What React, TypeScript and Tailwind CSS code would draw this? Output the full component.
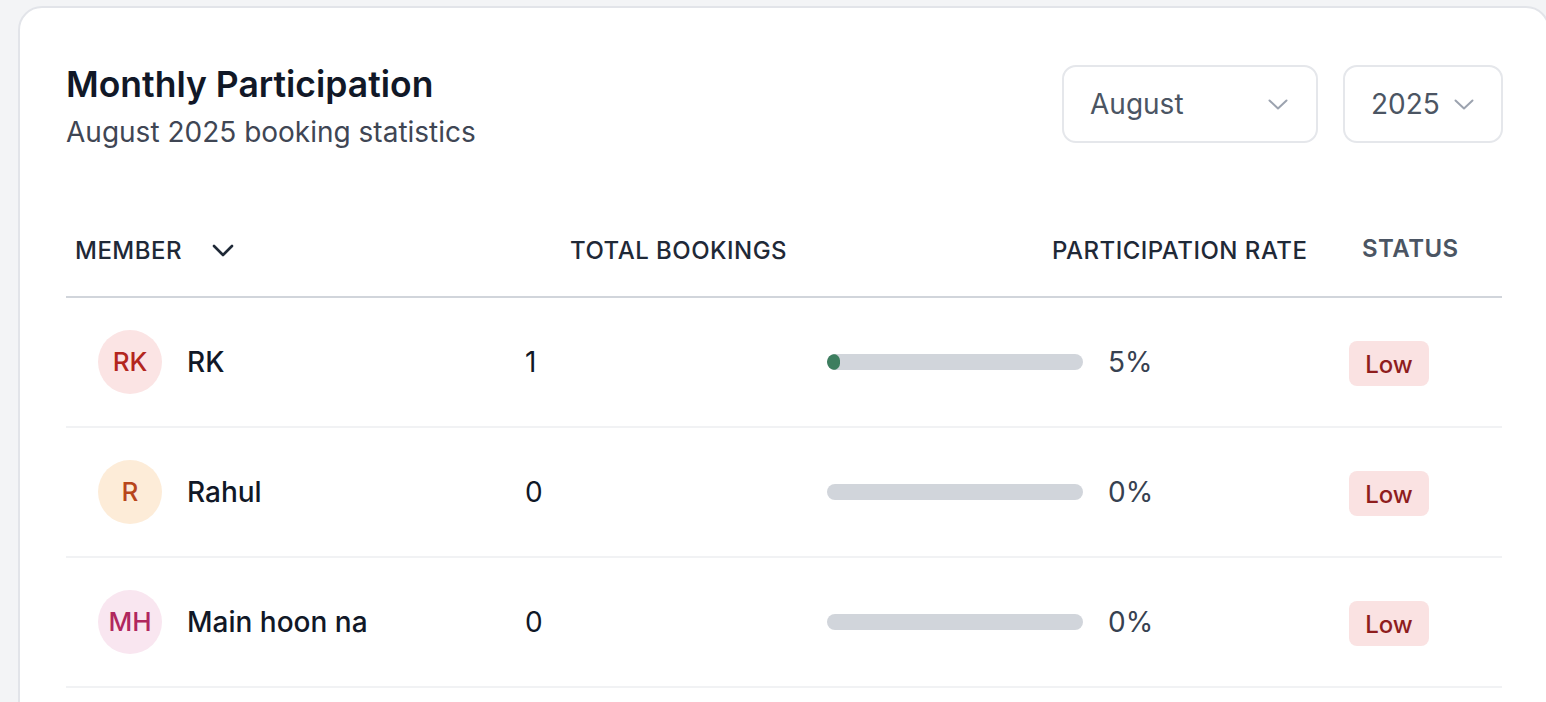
import React from "react";

type Row = {
  initials: string;
  name: string;
  bookings: number;
  rate: number;
  avatarBg: string;
  avatarText: string;
};

const rows: Row[] = [
  { initials: "RK", name: "RK", bookings: 1, rate: 5, avatarBg: "bg-[#fbe4e4]", avatarText: "text-[#b3261e]" },
  { initials: "R", name: "Rahul", bookings: 0, rate: 0, avatarBg: "bg-[#fdecd8]", avatarText: "text-[#b8461b]" },
  { initials: "MH", name: "Main hoon na", bookings: 0, rate: 0, avatarBg: "bg-[#f9e6f0]", avatarText: "text-[#b0275e]" },
];

function SelectChevron() {
  return (
    <svg width="20" height="11" viewBox="0 0 20 11" fill="none">
      <polyline points="1.5,1.5 10,9.5 18.5,1.5" stroke="#9ca3af" strokeWidth="2" strokeLinecap="round" strokeLinejoin="round" />
    </svg>
  );
}

function Select({ label, width, textPad, gap }: { label: string; width: string; textPad: string; gap: string }) {
  return (
    <div className={`flex h-[78px] items-center rounded-[14px] border-2 border-[#e5e7eb] bg-white ${width} ${textPad}`}>
      <span className="text-[28px] leading-none text-[#4b5563]">{label}</span>
      <span className={gap}>
        <SelectChevron />
      </span>
    </div>
  );
}

export default function App() {
  return (
    <div
      className="min-h-[702px] w-full overflow-hidden bg-[#f3f4f6] pl-[18px] pt-[6px]"
      style={{ fontFamily: "Inter, 'Noto Sans', sans-serif" }}
    >
      <div className="w-[1532px] rounded-[24px] border-2 border-[#e2e4e9] bg-white px-[46px] pt-[57px] pb-[40px]">
        <div className="flex items-start justify-between">
          <div>
            <h2 className="text-[35.5px] font-semibold leading-[40px] text-[#111827]">Monthly Participation</h2>
            <p className="mt-[7px] text-[28px] leading-[40px] text-[#3f4654]">August 2025 booking statistics</p>
          </div>
          <div className="-mr-[1px] flex gap-[25px]">
            <Select label="August" width="w-[256px]" textPad="pl-[26px]" gap="ml-[84px]" />
            <Select label="2025" width="w-[160px]" textPad="pl-[26px]" gap="ml-[14px]" />
          </div>
        </div>

        <div className="mt-[51px]">
          <div className="grid h-[95px] grid-cols-[437px_300px_524px_175px] items-center border-b-2 border-[#d1d5db] text-[24px] leading-[32px] text-[#1f2937]">
            <div className="flex items-center pl-[9px] pt-[2px] font-medium tracking-[0.02em]">
              <span>MEMBER</span>
              <svg className="ml-[30px]" width="22" height="13" viewBox="0 0 22 13" fill="none">
                <polyline points="2,2 11,11 20,2" stroke="#1f2937" strokeWidth="2.6" strokeLinecap="round" strokeLinejoin="round" />
              </svg>
            </div>
            <div className="pl-[67px] pt-[2px] font-medium tracking-[0.02em]">TOTAL BOOKINGS</div>
            <div className="pl-[249px] pt-[2px] font-medium tracking-[0.02em]">PARTICIPATION RATE</div>
            <div className="-mt-[2px] pl-[35px] font-semibold tracking-[0.02em] text-[#4b5563]">STATUS</div>
          </div>

          {rows.map((r) => (
            <div
              key={r.name}
              className="grid h-[130px] grid-cols-[437px_300px_524px_175px] items-center border-b-2 border-[#f1f2f4]"
            >
              <div className="flex items-center pl-[32px]">
                <div className={`flex h-[64px] w-[64px] items-center justify-center rounded-full ${r.avatarBg}`}>
                  <span className={`text-[26px] font-medium leading-none ${r.avatarText}`}>{r.initials}</span>
                </div>
                <span className="ml-[25px] text-[28px] font-medium leading-none text-[#111827]">{r.name}</span>
              </div>
              <div className="pl-[22px] text-[28px] leading-none text-[#111827]">{r.bookings}</div>
              <div className="flex items-center pl-[24px]">
                <div className="h-[16px] w-[256px] overflow-hidden rounded-full bg-[#d1d5db]">
                  <div
                    className="h-full rounded-full bg-[#3d7e5f]"
                    style={{ width: `${(256 * r.rate) / 100}px` }}
                  />
                </div>
                <span className="ml-[25px] text-[28px] leading-none text-[#374151]">{r.rate}%</span>
              </div>
              <div className="pl-[22px] pt-[2px]">
                <span className="inline-flex h-[45px] w-[80px] items-center justify-center rounded-[8px] bg-[#fae2e2] pt-[3px] text-[24px] font-medium text-[#8f1d1d]">
                  Low
                </span>
              </div>
            </div>
          ))}
        </div>
      </div>
    </div>
  );
}
